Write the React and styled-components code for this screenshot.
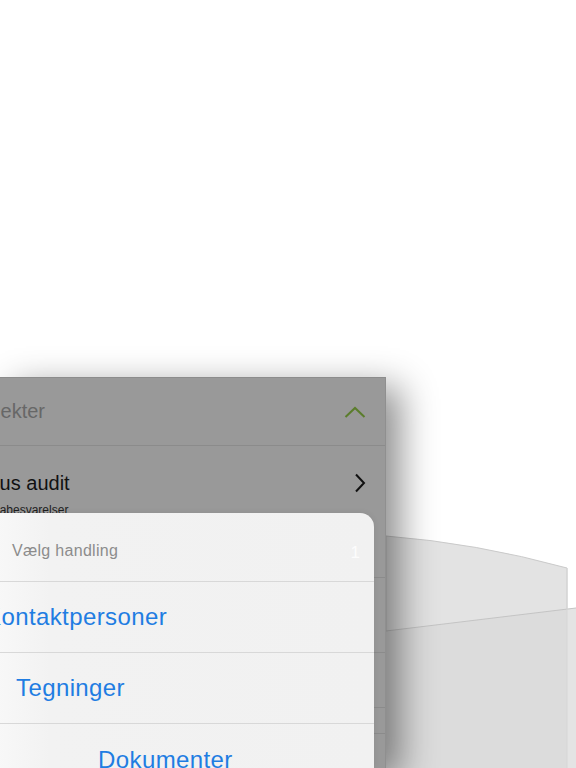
import React from 'react';
import styled, { createGlobalStyle } from 'styled-components';

const GlobalStyle = createGlobalStyle`
    html, body {
        margin: 0;
        height: 100%;
        background: #fff;
        overflow: hidden;
    }

    body {
        font-family: "Liberation Sans", Arial, Helvetica, sans-serif;
    }
`;

const Page = styled.div`
    width: 576px;
    height: 768px;
    padding-top: 377px;
    box-sizing: border-box;
    overflow: hidden;
`;

const Stage = styled.div`
    display: flex;
    height: 391px;
`;

const Panel = styled.div`
    position: relative;
    z-index: 1;
    flex: none;
    width: 386px;
    background: #999999;
    border-top: 1px solid #8c8c8c;
    border-right: 1px solid #8f8f8f;
    box-sizing: border-box;
    box-shadow: 14px 10px 34px rgba(0, 0, 0, 0.45);
    overflow: hidden;
`;

const PanelHeader = styled.div`
    display: flex;
    align-items: center;
    justify-content: space-between;
    height: 68px;
    padding-right: 19px;
    box-sizing: border-box;
    border-bottom: 1px solid #8b8b8b;
`;

const HeaderTitle = styled.span`
    margin-left: -35px;
    font-size: 20px;
    color: #676767;
    white-space: nowrap;
`;

const ListRow = styled.div`
    display: flex;
    align-items: flex-start;
    justify-content: space-between;
    height: ${p => p.$height}px;
    padding: 25px 19px 0 0;
    box-sizing: border-box;
    border-bottom: 1px solid #8b8b8b;
`;

const RowText = styled.div`
    display: flex;
    flex-direction: column;
    margin-left: -36px;
`;

const RowTitle = styled.span`
    font-size: 20px;
    line-height: 24px;
    color: #111;
    white-space: nowrap;
`;

const RowSub = styled.span`
    margin-top: 8px;
    margin-left: 5px;
    font-size: 12px;
    line-height: 14px;
    color: #1e1e1e;
    white-space: nowrap;
`;

const ActionSheet = styled.div`
    position: absolute;
    top: 135px;
    left: -20px;
    right: 11px;
    bottom: 0;
    background: linear-gradient(90deg, #fafafa 0px, #f2f2f2 70px, #f1f1f1 100%);
    border-radius: 14px 14px 0 0;
    box-shadow: 0 0 6px rgba(0, 0, 0, 0.08);
`;

const SheetHeader = styled.div`
    display: flex;
    justify-content: space-between;
    height: 69px;
    padding: 28px 14px 0 32px;
    box-sizing: border-box;
    border-bottom: 1px solid #d8d8d8;
`;

const SheetTitle = styled.span`
    font-size: 16px;
    line-height: 20px;
    letter-spacing: 0.3px;
    color: #8c8c8c;
`;

const Badge = styled.span`
    font-size: 17px;
    line-height: 24px;
    color: rgba(255, 255, 255, 0.85);
`;

const SheetItem = styled.div`
    display: flex;
    align-items: center;
    height: 71px;
    padding-left: ${p => p.$indent + 20}px;
    box-sizing: border-box;
    border-bottom: ${p => (p.$last ? 'none' : '1px solid #d8d8d8')};
    font-size: 24px;
    line-height: 28px;
    letter-spacing: 0.4px;
    color: #1f7de2;
    white-space: nowrap;
`;

const Backdrop = styled.svg`
    display: block;
    flex: 1;
    height: 391px;
`;

function ChevronUp() {
    return (
        <svg width="22" height="14" viewBox="0 0 22 14">
            <path d="M1.5 12 L11 3 L20.5 12" fill="none" stroke="#5b7d2c" strokeWidth="2" />
        </svg>
    );
}

function ChevronRight() {
    return (
        <svg width="12" height="20" viewBox="0 0 12 20" style={{ marginTop: 2 }}>
            <path d="M2 1.5 L10 10 L2 18.5" fill="none" stroke="#111" strokeWidth="2" />
        </svg>
    );
}

const rows = [
    { height: 132, title: 'Status audit', sub: 'Skemabesvarelser' },
    { height: 75 },
    { height: 55 },
    { height: 16 },
];

const actions = [
    { label: 'Kontaktpersoner', indent: -15 },
    { label: 'Tegninger', indent: 16 },
    { label: 'Dokumenter', indent: 98 },
];

function App() {
    return (
        <>
            <GlobalStyle />
            <Page>
                <Stage>
                    <Panel>
                        <PanelHeader>
                            <HeaderTitle>Projekter</HeaderTitle>
                            <ChevronUp />
                        </PanelHeader>
                        {rows.map((r, i) => (
                            <ListRow key={i} $height={r.height}>
                                {r.title && (
                                    <>
                                        <RowText>
                                            <RowTitle>{r.title}</RowTitle>
                                            <RowSub>{r.sub}</RowSub>
                                        </RowText>
                                        <ChevronRight />
                                    </>
                                )}
                            </ListRow>
                        ))}
                        <ActionSheet>
                            <SheetHeader>
                                <SheetTitle>Vælg handling</SheetTitle>
                                <Badge>1</Badge>
                            </SheetHeader>
                            {actions.map((a, i) => (
                                <SheetItem key={a.label} $indent={a.indent} $last={i === actions.length - 1}>
                                    {a.label}
                                </SheetItem>
                            ))}
                        </ActionSheet>
                    </Panel>
                    <Backdrop viewBox="0 0 190 391" preserveAspectRatio="none">
                        <path d="M0 159 Q90 166 181 191 L181 391 L0 391 Z" fill="#e3e3e3" stroke="#cacaca" strokeWidth="1" />
                        <path d="M181 232 L190 231 L190 391 L181 391 Z" fill="#e4e4e4" />
                        <path d="M0 254 L181 232 L181 391 L0 391 Z" fill="#dcdcdc" />
                        <path d="M0 254 L190 231" fill="none" stroke="#c4c4c4" strokeWidth="1" />
                        <path d="M181 191 L181 391" fill="none" stroke="#d6d6d6" strokeWidth="1" />
                    </Backdrop>
                </Stage>
            </Page>
        </>
    );
}

export default App;
